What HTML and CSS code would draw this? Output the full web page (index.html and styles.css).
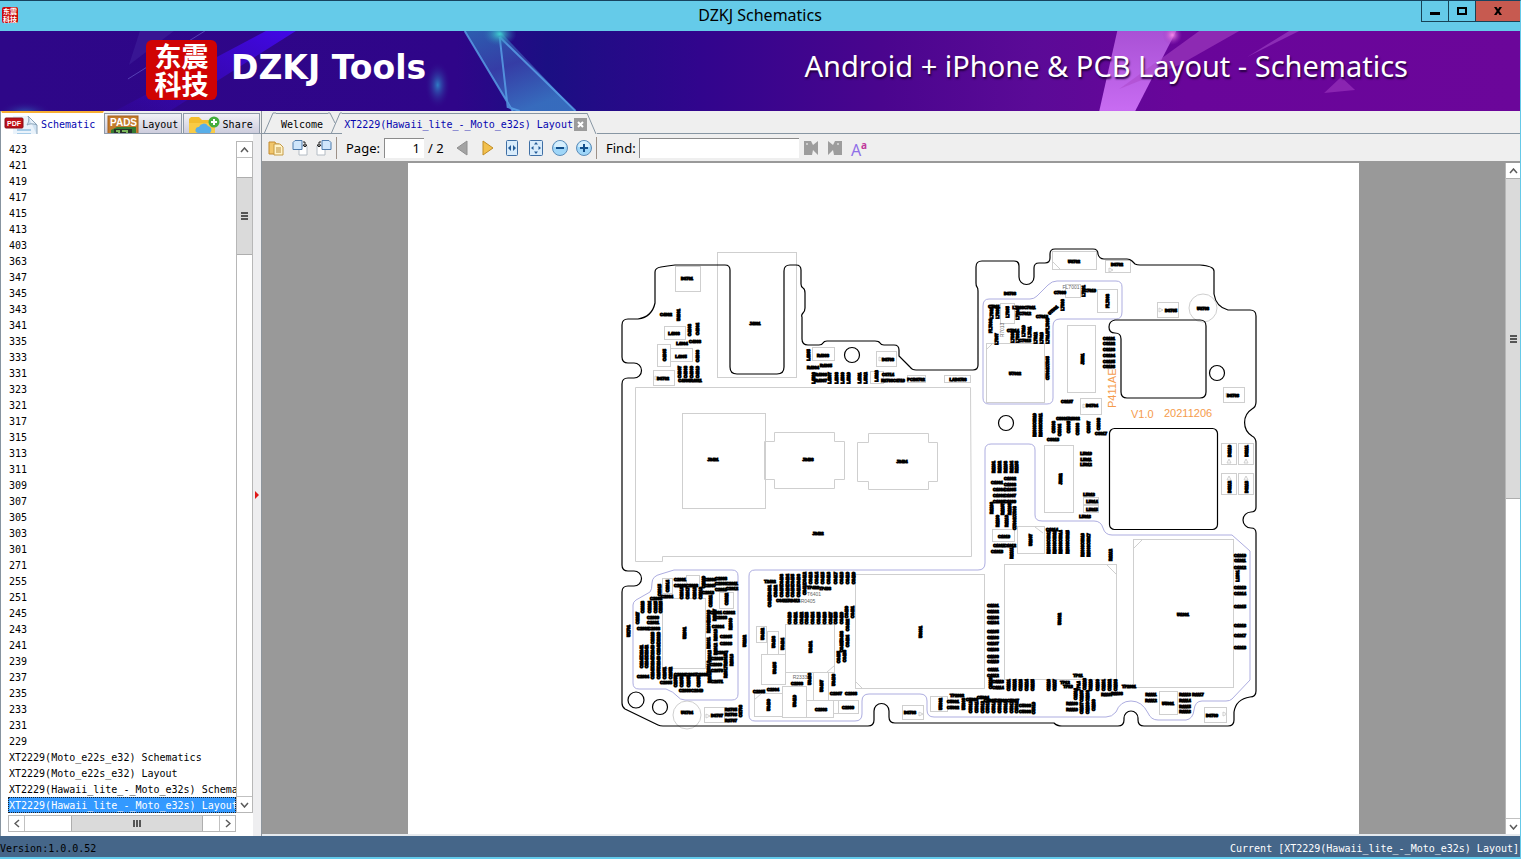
FILE: index.html
```html
<!DOCTYPE html>
<html lang="en">
<head>
<meta charset="utf-8">
<title>DZKJ Schematics</title>
<link rel="stylesheet" href="styles.css">
</head>
<body>
<header class="titlebar">
  <div class="appicon"><span>东震</span><span>科技</span></div>
  <h1 class="title">DZKJ Schematics</h1>
  <div class="winbtns">
    <button class="win" aria-label="Minimize"><svg width="10" height="10"><path d="M0 6h10v3H0z"/></svg></button>
    <button class="win" aria-label="Maximize"><svg width="10" height="8"><path d="M1 1h8v6H1z" fill="none" stroke="#000" stroke-width="2"/></svg></button>
    <button class="win close" aria-label="Close"><svg width="8" height="8"><path d="M0 0h2.500l1.500 2.300L5.500 0H8L5.300 4 8 8H5.500L4 5.700 2.500 8H0l2.700-4z"/></svg></button>
  </div>
</header>
<section class="banner">
  <svg class="art" viewBox="0 0 1521 80" preserveAspectRatio="none" aria-hidden="true">
    <defs>
      <linearGradient id="beam" x1="1" y1="0" x2="0" y2="1"><stop offset="0" stop-color="#4208e8"/><stop offset="1" stop-color="#3a08c8" stop-opacity=".15"/></linearGradient>
      <linearGradient id="glass" x1="0" y1="0" x2=".5" y2="1"><stop offset="0" stop-color="#2d7bbd"/><stop offset=".5" stop-color="#3b4db0"/><stop offset="1" stop-color="#3f8ad0"/></linearGradient>
      <linearGradient id="pink" x1="0" y1="0" x2="0" y2="1"><stop offset="0" stop-color="#a951d5"/><stop offset="1" stop-color="#c86cf2"/></linearGradient>
      <radialGradient id="glow"><stop offset="0" stop-color="#2f7cc4"/><stop offset="1" stop-color="#2f0686" stop-opacity="0"/></radialGradient>
      <radialGradient id="teal"><stop offset="0" stop-color="#3fd0d0"/><stop offset="1" stop-color="#2a6ab0" stop-opacity="0"/></radialGradient>
      <radialGradient id="rose"><stop offset="0" stop-color="#f58ae8"/><stop offset="1" stop-color="#9a30c0" stop-opacity="0"/></radialGradient>
    </defs>
    <path d="M266 0h30L170 80h-55z" fill="url(#beam)"/>
    <path d="M140 0h34l-45 34z" fill="#42249e" opacity=".5"/>
    <path d="M205 0L128 48" stroke="#5540b5"/>
    <ellipse cx="438" cy="54" rx="13" ry="24" fill="url(#glow)"/>
    <ellipse cx="25" cy="82" rx="28" ry="12" fill="url(#glow)" opacity=".7"/>
    <path d="M465 0h35l76 80h-63z" fill="url(#glass)" opacity=".75"/>
    <path d="M465 0l48 80M500 6l76 74M500 6l8 70 12 4" fill="none" stroke="#5aa2e8" stroke-width="2" opacity=".8"/>
    <ellipse cx="500" cy="3" rx="17" ry="12" fill="url(#teal)"/>
    <path d="M1118 0h59l-41 80h-36z" fill="url(#pink)"/>
    <path d="M1200 0h40l-60 34-60 24z" fill="#ac48c8" opacity=".55"/>
    <path d="M1290 0h10l-52 26z" fill="#a146c8" opacity=".6"/>
    <path d="M1342 46l14 13-31 3z" fill="#9b35bd" opacity=".65"/>
    <circle cx="1173" cy="4" r="10" fill="url(#rose)"/>
  </svg>
  <div class="logo"><span>东震</span><span>科技</span></div>
  <strong class="brand">DZKJ Tools</strong>
  <p class="slogan">Android + iPhone &amp; PCB Layout - Schematics</p>
</section>
<div class="work">
  <aside class="side">
    <nav class="sidetabs">
      <button class="stab on">
        <svg width="34" height="20"><path d="M9 1h15l9 8v11H9z" fill="#eaf3fb"/><path d="M24 1l9 9v10M24 1c2 4 0 7-1 9 4-2 7-1 10 0" fill="#cfe2f2" stroke="#8aa3b8"/><path d="M13 14h14v2H13zM13 18h14v2H13z" fill="#a7cce8"/><rect x="1" y="3" width="18" height="10" rx="1" fill="#c01018" stroke="#851018"/><text x="3" y="11" class="pdf">PDF</text></svg>
        <span>Schematic</span></button>
      <button class="stab">
        <svg width="32" height="19"><rect x="1" y="1" width="30" height="18" fill="#c27a2c" stroke="#a6601c"/><path d="M4 15l6-3h19v7H4z" fill="#347b32"/><path d="M7 14h18v5H7z" fill="#26302a"/><path d="M9 16h3v3M15 16h5v3" fill="none" stroke="#7bb85c" stroke-width="2"/><text x="3" y="11" class="pads">PADS</text></svg>
        <span>Layout</span></button>
      <button class="stab">
        <svg width="34" height="20"><path d="M3 4l2-2h8l3 3h13v15H3z" fill="#f3bd2e"/><path d="M3 8h26v12H3z" fill="#f9cb45"/><path d="M12 18a3 3 0 0 1 1-6 5 5 0 0 1 9-1 4 4 0 0 1 2 7z" fill="#58aee8"/><circle cx="28" cy="7" r="5.500" fill="#44ad3d"/><path d="M28 4v6M25 7h6" stroke="#fff" stroke-width="2"/></svg>
        <span>Share</span></button>
    </nav>
    <div class="listwrap">
      <ul class="list" id="files" role="listbox" aria-label="Files"></ul>
      <div class="vbar">
        <button class="arr" aria-label="Scroll up"><svg width="9" height="6"><path d="M1 5l3.500-4L8 5"/></svg></button>
        <div class="track"><div class="thumb side-thumb"><i class="grip"></i></div></div>
        <button class="arr" aria-label="Scroll down"><svg width="9" height="6"><path d="M1 1l3.500 4L8 1"/></svg></button>
      </div>
    </div>
    <div class="hbar">
      <button class="arr" aria-label="Scroll left"><svg width="6" height="9"><path d="M5 1L1 4.500 5 8"/></svg></button>
      <div class="htrack"><div class="hthumb"><i class="hgrip"></i></div></div>
      <button class="arr" aria-label="Scroll right"><svg width="6" height="9"><path d="M1 1l4 3.500L1 8"/></svg></button>
    </div>
    <svg class="split" width="4" height="8"><path d="M0 0l4 4-4 4z" fill="#e01818"/></svg>
  </aside>
  <main class="main">
    <nav class="doctabs">
      <svg class="edge" width="14" height="22"><path d="M2 22L11 1h3"/></svg>
      <button class="dtab welcome">Welcome</button>
      <svg class="edge" width="14" height="22"><path d="M0 1h2l5 10M3 22L12 1h2"/></svg>
      <button class="dtab current">XT2229(Hawaii_lite_-_Moto_e32s) Layout</button>
      <div class="xwrap"><button class="x" aria-label="Close tab"><svg width="7" height="7"><path d="M1 1l5 5M6 1L1 6" stroke="#fff" stroke-width="2"/></svg></button></div>
      <svg class="edge last" width="10" height="22"><path d="M0 1l9 21"/></svg>
      <div class="rest"></div>
    </nav>
    <div class="toolbar">
      <button class="tb" aria-label="Open"><svg width="16" height="16"><path d="M1 2h6l1 2h3v10H1z" fill="#f1c66b" stroke="#c38a2f"/><path d="M6 4h6l3 3v8H6z" fill="#fff3c8" stroke="#c59b46"/><path d="M8 8h5M8 10h5M8 12h5" stroke="#b98d3a"/></svg></button>
      <button class="tb" aria-label="Rotate right"><svg width="16" height="16"><path d="M7 6h8v9H7z" fill="#fff" stroke="#b4bcc4"/><path d="M1 2.500l2-2h7v9H1z" fill="#cfe6fb" stroke="#4f7cad"/><path d="M11 2h2v3M11 5h4l-2 2z" fill="none" stroke="#222"/></svg></button>
      <button class="tb" aria-label="Rotate left"><svg width="16" height="16"><path d="M1 6h8v9H1z" fill="#fff" stroke="#b4bcc4"/><path d="M6 .5h7l2 2v7H6z" fill="#cfe6fb" stroke="#4f7cad"/><path d="M5 2H3v3M1 5h4L3 7z" fill="none" stroke="#222"/></svg></button>
      <i class="sep"></i>
      <label class="lab page-l" for="page">Page:</label><input class="field pg" id="page" value="1">
      <span class="of">/ 2</span>
      <button class="tb prev" aria-label="Previous page"><svg width="12" height="16"><path d="M11 1v14L1 8z" fill="#a3a3a3" stroke="#8f8f8f"/></svg></button>
      <button class="tb next" aria-label="Next page"><svg width="12" height="16"><path d="M1 1v14L11 8z" fill="#f2c04d" stroke="#c18c25"/></svg></button>
      <button class="tb" aria-label="Fit width"><svg width="12" height="16"><rect x=".5" y=".5" width="11" height="15" rx="1" fill="#d9ecfb" stroke="#3f6fa5"/><path d="M5 5v6L2 8zM7 5v6l3-3z" fill="#245c98"/></svg></button>
      <button class="tb" aria-label="Fit page"><svg width="14" height="16"><rect x=".5" y=".5" width="13" height="15" rx="1" fill="#d9ecfb" stroke="#3f6fa5"/><path d="M7 2l2 2.500H5zM7 14l2-2.500H5zM2 8l2.500-2v4zM12 8L9.500 6v4z" fill="#245c98"/></svg></button>
      <button class="tb" aria-label="Zoom out"><svg width="16" height="16"><circle cx="8" cy="8" r="7.500" fill="#9fd6f8" stroke="#5c8cb8"/><path d="M2 7a6 6 0 0 1 12 0z" fill="#d6effd"/><path d="M4 7h8v2H4z" fill="#12508c"/></svg></button>
      <button class="tb" aria-label="Zoom in"><svg width="16" height="16"><circle cx="8" cy="8" r="7.500" fill="#9fd6f8" stroke="#5c8cb8"/><path d="M2 7a6 6 0 0 1 12 0z" fill="#d6effd"/><path d="M4 7h3V4h2v3h3v2H9v3H7V9H4z" fill="#12508c"/></svg></button>
      <i class="sep"></i>
      <label class="lab find-l" for="find">Find:</label><input class="field fd" id="find">
      <button class="tb" aria-label="Find previous"><svg width="16" height="16"><path d="M1 1h7l2 4 5-4v14l-5-5-1 5H1z" fill="#9d9d9d"/><circle cx="4" cy="4" r="1" fill="#ddd"/></svg></button>
      <button class="tb" aria-label="Find next"><svg width="16" height="16"><path d="M15 1H8L6 5 1 1v14l5-5 1 5h8z" fill="#9d9d9d"/><circle cx="11" cy="4" r="1" fill="#ddd"/></svg></button>
      <button class="tb case" aria-label="Match case"><span class="big">A</span><span class="small">a</span></button>
    </div>
    <div class="viewer">
      <div class="desk"><svg class="board" id="board" viewBox="408 163 951 671" role="img" aria-label="Board layout">
        <g class="thin">
          <rect x="717.5" y="252.5" width="79" height="125"/>
          <path d="M635.5 387.500H970.500L971.500 556.500H662.500V561.500H635.500z"/>
          <rect x="682.5" y="413.5" width="83" height="95"/>
          <path d="M774.500 432.500h60v9h10v38h-10v9h-60v-9h-10v-38h10zM868.500 433.500h60v9h9v39h-9v8h-60v-8h-11v-39h11z"/>
          <path d="M1134 548l9-9M1106 564l10 10M986 350l7-7M1035 527l8 6M827 672l7-6M855 681l7 7M754 700l8-7M1053 262l7 7"/>
          <circle cx="687" cy="715" r="14"/><circle cx="1203" cy="308" r="14"/>
        </g>
        <g class="zone">
          <path d="M983 306Q983 299 989 299H1030Q1034 299 1037 296L1048 285Q1052 281 1057 281H1116Q1122 281 1122 287V312Q1122 319 1116 319H1060Q1053 319 1053 326V398Q1053 404 1047 404H989Q983 404 983 398z"/>
          <path d="M749 576Q749 570 755 570H978Q985 570 985 563V450Q985 444 991 444H1029Q1035 444 1035 450V515Q1035 521 1042 521H1094Q1101 521 1103 528T1112 535H1232L1250 551V680L1232 699Q1230 701 1226 701H1202Q1195 701 1194 710T1186 720H1158Q1151 720 1148 713Q1142 701 1131 701T1116 712Q1112 717 1106 717H934Q927 717 927 710V701Q927 694 920 694H869Q862 694 862 701V714Q862 721 855 721H755Q749 721 749 715z"/>
          <path d="M674 570H732Q738 570 738 576V694Q738 700 732 700H685Q680 700 677 696T666 689H639Q633 689 633 683V605Q633 602 636 600L650 592Q652 590 652 583T661 574z"/>
        </g>
        <g class="outline">
          <path d="M675 265H725Q730 265 730 270V367Q730 374 737 374H777Q784 374 784 367V271Q784 265 790 265H796Q801 265 801 270V284Q801 287 803 288T805 293V308Q805 311 803 313T802 317V339Q802 345 808 345H819Q822 345 823 343T827 341H875Q879 341 880 343T884 345H894Q899 345 899 350V356L910 367Q912 370 916 370H973Q978 370 978 365V291Q978 288 977 287T976 283V267Q976 261 982 261H1014Q1019 261 1019 266V277A7.500 7.500 0 0 0 1034 277V268Q1034 263 1039 263H1045Q1050 263 1050 258V254Q1050 249 1055 249H1093Q1098 249 1098 254Q1099 259 1104 259H1127Q1130 259 1132 261L1135 264Q1137 265 1140 265H1200Q1214 266 1214 271V294Q1216 307 1228 310H1250Q1256 310 1256 316V402Q1256 407 1252 409A16 16 0 0 0 1252 436Q1256 438 1256 443V507Q1256 512 1251 512A8 8 0 0 0 1251 528Q1256 528 1256 533V691Q1256 697 1250 697Q1236 699 1234 712V720Q1234 726 1228 726H1144Q1138 726 1138 720V718A7 7 0 0 0 1124 718V720Q1124 726 1118 726H1062Q1057 726 1054 723H895Q889 723 889 717V711A7.500 7.500 0 0 0 874 711V720Q874 726 868 726H663Q660 726 658 725L625 709Q622 707 622 703V592Q622 586 628 586H634A7.500 7.500 0 0 0 634 571H628Q622 571 622 565V384Q622 378 628 378H634A7.500 7.500 0 0 0 634 363H628Q622 363 622 357V325Q622 319 628 319H638Q652 317 655 303V272Q655 268 661 267T675 265z"/>
          <circle cx="852" cy="355" r="7.500"/><circle cx="1217" cy="373" r="7.500"/><circle cx="1006" cy="423" r="7.500"/><circle cx="636" cy="700" r="8"/><circle cx="660" cy="707" r="7.500"/>
          <path d="M1115 320H1200Q1206 320 1206 326V392Q1206 398 1200 398H1127Q1121 398 1121 392V339Q1121 333 1115 333Q1109 333 1109 327T1115 320z"/>
          <rect x="1109.500" y="428.500" width="108" height="101" rx="5"/>
        </g>
        <g class="mark"><text x="1131" y="418">V1.0</text><text x="1164" y="417">20211206</text><text transform="translate(1116 408) rotate(-90)">P411AE</text></g>
      </svg></div>
      <div class="vbar">
        <button class="arr" aria-label="Scroll up"><svg width="9" height="6"><path d="M1 5l3.500-4L8 5"/></svg></button>
        <div class="track"><div class="thumb main-thumb"><i class="grip"></i></div></div>
        <button class="arr" aria-label="Scroll down"><svg width="9" height="6"><path d="M1 1l3.500 4L8 1"/></svg></button>
      </div>
    </div>
  </main>
</div>
<footer class="status"><span>Version:1.0.0.52</span><span class="cur">Current [XT2229(Hawaii_lite_-_Moto_e32s) Layout]</span></footer>
<script src="app.js"></script>
</body>
</html>
```
FILE: styles.css
```css
* { box-sizing: border-box; }
body {
  margin: 0; height: 100vh; display: flex; flex-direction: column; overflow: hidden;
  background: #efefef; border-top: 1px solid #17435f; border-right: 1px solid #65c9e8; border-bottom: 2px solid #62cbec;
  font: 10px/16px "DejaVu Sans Mono", monospace; color: #000;
}
button { font: inherit; color: inherit; margin: 0; padding: 0; border: 0; background: none; display: flex; align-items: center; justify-content: center; }
svg { display: block; flex: none; }

.titlebar { height: 30px; flex: none; display: grid; grid-template-columns: 100px 1fr 100px; background: #65cbe9; }
.appicon { width: 16px; height: 16px; margin: 6px 0 0 2px; border-radius: 2px; background: #cb0a0a; color: #fff; font: bold 7px/8px "Noto Sans CJK SC", sans-serif; display: flex; flex-direction: column; align-items: center; justify-content: center; }
.title { margin: 0; text-align: center; font: 16px/28px "Noto Sans", sans-serif; }
.winbtns { display: flex; justify-content: flex-end; height: 21px; }
.win { width: 27px; border: 1px solid #174256; border-top: 0; border-right: 0; }
.win.close { width: 45px; background: #c75a50; }

.banner { position: relative; height: 80px; flex: none; display: flex; align-items: center; padding: 0 112px 0 146px; color: #fff; background: linear-gradient(90deg, #2e0788 0%, #2f0589 30%, #1b0f83 36%, #31058d 46%, #4a058e 58%, #5b0a97 68%, #69059a 78%, #6b069a 100%); }
.art { position: absolute; inset: 0; width: 100%; height: 100%; }
.logo { position: relative; width: 71px; height: 60px; margin-bottom: 2px; border-radius: 6px; background: #d00303; font: bold 27px/28px "Noto Sans CJK SC", sans-serif; display: flex; flex-direction: column; align-items: center; justify-content: center; }
.brand { position: relative; margin: 0 0 6px 14px; font: bold 33px/40px "DejaVu Sans", sans-serif; white-space: nowrap; }
.slogan { position: relative; margin: 0 0 10px auto; font: 29px/40px "Noto Sans", sans-serif; text-shadow: 1px 2px 2px #22003c; white-space: nowrap; }

.work { flex: 1; min-height: 0; display: flex; }
.side { position: relative; flex: none; width: 262px; display: flex; flex-direction: column; padding-bottom: 4px; background: #fff; border-left: 1px solid #8794a0; border-right: 1px solid #8e969d; box-shadow: inset -8px 0 #eeeef0; }
.sidetabs { height: 23px; flex: none; display: flex; align-items: flex-end; background: #efefef; border-bottom: 1px solid #909cad; }
.stab { height: 20px; padding: 2px 4px 0 2px; gap: 3px; justify-content: flex-start; overflow: hidden; white-space: nowrap; background: linear-gradient(#f1f1f6, #cdcddd); border: 1px solid #8d99a8; border-bottom: 0; width: 78px; margin-right: 1px; }
.stab.on { width: 104px; height: 23px; margin: 0 0 -1px; background: #fff; border-color: #fff; border-top: 2px solid #f7ae32; color: #0606b0; }
.pdf { font: bold 7px "Liberation Sans", sans-serif; fill: #fff; }
.pads { font: bold 10px "Liberation Sans", sans-serif; fill: #fff; }
.listwrap { flex: 1; min-height: 0; display: flex; margin: 7px 8px 2px 7px; }
.list { flex: 1; min-width: 0; overflow: hidden; margin: 0; padding: 0; list-style: none; white-space: nowrap; }
.list li { height: 16px; padding-left: 1px; line-height: 18px; overflow: hidden; }
.list .sel { color: #fff; background: #3399ff; outline: 1px dotted #202020; outline-offset: -1px; }
.vbar { flex: none; width: 17px; display: flex; flex-direction: column; background: #fff; border: 1px solid #b7b7b7; }
.arr { flex: none; width: 15px; height: 15px; background: #fff; }
.arr path { fill: none; stroke: #5a5a5a; stroke-width: 1.500; }
.track { flex: 1; border: solid #c1c1c1; border-width: 1px 0; }
.thumb { display: flex; align-items: center; justify-content: center; background: #dadada; border: solid #aeaeae; border-width: 1px 0; }
.side-thumb { height: 78px; margin-top: 19px; }
.main-thumb { height: 321px; margin-top: -1px; }
.grip { width: 7px; height: 8px; background: repeating-linear-gradient(#555 0 2px, #dadada 2px 3px); }
.hbar { flex: none; display: flex; height: 17px; width: 228px; margin-left: 7px; background: #fff; border: 1px solid #b7b7b7; }
.htrack { flex: 1; border: solid #c1c1c1; border-width: 0 1px; }
.hthumb { height: 100%; width: 132px; margin-left: 46px; background: #dadada; border: solid #aeaeae; border-width: 0 1px; display: flex; align-items: center; justify-content: center; }
.hgrip { width: 8px; height: 7px; background: repeating-linear-gradient(90deg, #555 0 2px, #dadada 2px 3px); }
.split { position: absolute; right: 2px; top: 53%; margin-top: -4px; }

.main { flex: 1; min-width: 0; display: flex; flex-direction: column; }
.doctabs { height: 23px; flex: none; display: flex; align-items: flex-end; }
.edge path { fill: none; stroke: #8796a3; }
.edge { height: 22px; border-bottom: 1px solid #8796a3; }
.edge.last { border-bottom: 0; }
.dtab { height: 21px; border-top: 1px solid #8796a3; border-bottom: 1px solid #8796a3; white-space: nowrap; padding: 2px 5px 0; }
.dtab.current { color: #0606b0; border-bottom-color: #efefef; padding: 2px 1px 0 2px; }
.xwrap { height: 21px; border-top: 1px solid #8796a3; padding-top: 4px; }
.x { width: 13px; height: 13px; background: #9b9b9b; }
.rest { flex: 1; border-bottom: 1px solid #8796a3; }
.toolbar { height: 29px; flex: none; display: flex; align-items: center; padding-left: 2px; border-bottom: 2px solid #999; font: 13px/20px "Noto Sans", sans-serif; }
.tb { flex: none; width: 24px; height: 24px; }
.sep { width: 1px; height: 22px; background: #9d9188; }
.lab { flex: none; margin-left: 9px; }
.page-l { width: 38px; }
.find-l { width: 33px; }
.field { height: 20px; font: inherit; border: solid #8b8b8b; border-width: 1px 0 0 1px; background: #fff; padding: 0 4px; border-radius: 0; min-width: 0; }
.pg { width: 40px; text-align: right; }
.fd { width: 160px; }
.of { flex: none; width: 22px; margin-left: 4px; }
.next { margin-left: 2px; }
.case { align-items: center; }
.big { font: 16px/20px "Noto Sans", sans-serif; color: #8f70e8; margin-top: 4px; }
.small { font: bold 10px/12px "Noto Sans", sans-serif; color: #c0389c; margin-bottom: 6px; }
.viewer { flex: 1; min-height: 0; display: flex; border-bottom: 2px solid #e6eaee; }
.desk { flex: 1; min-width: 0; padding: 0 146px; background: #999; }
.board { width: 100%; height: 100%; background: #fff; }
.viewer .vbar { width: 15px; border-width: 0 0 0 1px; }
.viewer .arr { width: 14px; }
.thin { fill: none; stroke: #cfcfcf; }
.zone { fill: none; stroke: #adade0; }
.outline { fill: none; stroke: #000; stroke-width: 1.200; }
.mark { fill: #f59b4c; font: 11px "Liberation Sans", sans-serif; }
.ref { font: bold 4px "Liberation Sans", sans-serif; fill: #000; stroke: #000; stroke-width: 1.200; text-anchor: middle; }
.ref.pale { font-weight: normal; font-size: 5px; fill: #666; stroke: none; }
.pad { fill: none; stroke: #e4e4e4; }
.status { height: 21px; flex: none; display: flex; justify-content: space-between; align-items: center; padding: 5px 1px 0 0; background: #456689; }
.cur { color: #fff; }
```
FILE: app.js
```js
const files = ("423 421 419 417 415 413 403 363 347 345 343 341 335 333 331 323 321 317 315 313 311 309 307 305 303 301 271 255 251 245 243 241 239 237 235 233 231 229").split(" ")
  .concat(["XT2229(Moto_e22s_e32) Schematics", "XT2229(Moto_e22s_e32) Layout", "XT2229(Hawaii_lite_-_Moto_e32s) Schematics", "XT2229(Hawaii_lite_-_Moto_e32s) Layout"]);
const list = document.getElementById("files");
files.forEach((name, i) => {
  const li = document.createElement("li");
  li.textContent = name;
  li.setAttribute("role", "option");
  if (i === files.length - 1) { li.className = "sel"; li.setAttribute("aria-selected", "true"); }
  list.append(li);
});

const NS = "http://www.w3.org/2000/svg";
const board = document.getElementById("board");
function add(parent, tag, attrs) {
  const el = document.createElementNS(NS, tag);
  for (const k in attrs) el.setAttribute(k, attrs[k]);
  parent.append(el);
  return el;
}

// Component bodies: x y width height
const bodies = `675 266 25 25;1052 251 44 18;1105 260 25 12;662 598 43 70;785 624 49 48;855 574 129 114;1004 564 112 115;1133 539 100 148;
1044 445 29 67;1067 325 28 67;986 343 58 59;761 654 24 30;754 693 28 23;782 686 24 31;806 700 27 17;767 631 11 23;756 626 10 16;1017 526 27 27;1097 289 20 23;
1157 302 21 15;1223 387 21 15;1221 443 15 21;1238 443 15 21;1221 473 15 21;1238 473 15 21;653 370 21 15;657 344 13 22;664 326 21 13;670 348 22 13;
876 351 20 15;902 705 21 14;704 707 20 15;1204 707 22 15;1159 691 18 23;930 696 17 15;838 700 20 13;813 672 15 28;1080 398 21 16;1000 303 14 20;1065 284 15 13;
812 347 22 13;870 371 13 12;907 375 18 7;944 375 26 7;992 529 22 12;719 592 14 16;686 575 13 11;662 578 10 15;1083 497 15 7;1083 505 15 7;833 700 5 13`;
const thin = board.querySelector(".thin");
bodies.split(";").forEach(s => {
  const [x, y, width, height] = s.trim().split(" ");
  add(thin, "rect", { x: +x + .5, y: +y + .5, width, height });
});

// Small triangles marking diode polarity
["655 376", "879 357", "1159 308", "1226 393", "1083 404", "706 714", "919 712", "1223 712", "1109 268"].forEach(s => {
  const [x, y] = s.split(" ");
  add(thin, "path", { d: `M${x} ${y}l4 2-4 2z` });
});
["1229 459", "1246 459", "1229 476", "1246 476"].forEach(s => {
  const [x, y] = s.split(" ");
  add(thin, "path", { d: `M${x - 2} ${+y + 4}h4l-2-4z` });
});

// Designators: orientation, first name, then x,y positions
const parts = `h D3702 663,378 888,359 1092,405 1171,310 1233,395 717,715 910,712 1212,715
h D3701 687,278 1117,264 1010,293
h J4001 755,323
h J3401 713,459 818,533 808,459 902,461
h U3702 1074,261 1203,308 687,712
h C4002 666,314 695,341
v U4001 678,315
v C4003 689,330 697,329 664,355 697,356 679,372 685,372 691,372 697,372
h L4003 674,333 682,343 681,356
h C4008R4011 690,380
v L4305 808,355 813,378 829,378 836,378 842,378 848,378 859,378 865,378 876,376
h R4303 823,355 813,367 826,365 821,374 821,380
h C3714 888,374
h R3708C3710 893,380
h PCB3702 916,379
h LAB3703 958,379
h C7009 1060,292 1090,290 994,306 1025,313 1042,316 1013,330 1025,340
v L7001 1083,291 991,313 997,313 1017,314 1007,312 1062,305 996,339 1012,337 1017,337 1023,331 1029,332 1035,338 1041,338 1047,338
v FL7003 1107,301 990,326 1047,325
p FL7001 1071,287
q R7013 1002,330
h L7009C7011 1024,307
h U7002 1015,373
v C7004C7005 1047,368 1014,518
v J3901 1082,359 1060,479
h C8101 1109,338 1109,343 1109,349 1109,355 1109,361 1109,366 1067,401
v R8009C8010 1034,425 1040,425 1048,542 1054,542 1060,542 1067,542 1082,545 1088,545
h C8001R8002 1068,418
v C8003 1053,427 1059,430 1068,427 1077,429 1088,427 1098,424
h C8017 1101,433 1053,439
v R1201 993,467 999,467 1005,467 1011,467 1016,467 991,508 1002,509 1009,509 997,521 1006,521 1011,553 1110,555
h C1001 997,482 1010,478 1010,484 999,489 1010,489 999,495 1010,495 999,501 1010,501 1004,536 999,545 1010,545 997,551 1052,529
v U1007 1030,540
h L5010 1086,453 1086,459 1086,464 1089,494 1092,501 1092,509 1085,516
v D3210 1229,451 1246,451 1229,487 1246,487
h C1310 1240,555 1240,560 1240,567 1240,587 1240,593 1240,606 1240,625 1240,635 1240,647
v L1301 1237,576
h C2001 680,579 680,585 692,585 667,596 656,598 710,579 710,585 721,578 721,583 721,589 732,583 732,588 708,592
v C2014 667,586 659,590 681,593 687,593 694,593 700,593 703,582 710,601 726,599 642,607 649,607 655,607 660,607 637,618 652,638 658,638
h C2030 653,617 653,622 643,628 654,628 643,676 666,682 680,674 691,674 702,674 685,690 697,690
v U2701 628,631
v C2041 641,651 646,651 652,651 658,649 641,662 646,662 652,662 658,662 652,673 658,673 664,673 670,673 675,681 681,681 688,681 698,681
v U2001 684,633
v R2006 708,616 714,615 708,627 730,624 715,635 708,643 715,649 709,656 708,667 725,660 731,660 725,672 709,677
h C2061 716,612 729,612 721,617 718,626 726,636 726,643 722,652 717,658 716,664 717,670 717,681
v U3202 744,641
h R3705 731,709 731,714 731,720
v C3708 740,711
h T2402 770,581
v C0401 769,591 775,591 781,580 787,580 792,580 798,580 781,591 787,591 792,591 798,591 804,589 804,578 810,578 816,578 822,578 828,578 835,578 841,578 847,578 853,578 769,601
h TP402 813,587 825,588
p R0405 808,601
p T6401 814,594
h C0411R0412 788,600
v C0420 789,618 795,618 801,618 806,618 812,618 818,618 824,618 830,618 835,618 841,618 846,612 852,612 847,625 841,637 847,641 838,657 844,656 841,646
v U0401 810,647 762,634 773,642 782,644 774,668 809,679 821,686 833,680 768,705 794,701
p R2333 800,677
h C2303 797,683 773,689 759,691 821,709 836,693 851,693 848,707
v U0601 920,632 1059,619
h U1301 1183,614
h C1101 993,605 993,611 993,617 993,622 993,631 993,637 993,643 993,649 993,656 993,661 993,669 993,675 998,681 998,687
v C1120 990,683 1008,685 1014,685 1020,685 1026,685 1032,685 1048,685 1054,685 1084,684 1090,685 1097,685 1103,685 1109,685 1115,685 1075,694 1081,696 1087,696 1081,708 1087,708 1093,705
h TP11 1078,675 1065,682 1068,686
v TP14 1078,686
h TP2001 1129,686 957,695
h R1107 1107,694 1117,693 1072,703 1072,709 1151,694 1151,700 1185,694 1185,700 1185,706 1185,711 1198,694
h U5001 1168,703
v U5002 940,704 963,704
h C5001 953,701 953,707 972,699 983,697 990,700 1001,700 1013,700 1025,705 1025,711
v C5010 970,707 976,707 982,707 987,707 993,707 999,707 1005,707 1011,707 1016,707 1033,708
d C7001 1053,310`;
const angle = { h: 0, v: -90, p: 0, q: -90, d: -40 };
const layer = add(board, "g", {});
parts.split("\n").forEach(row => {
  const [dir, first, ...spots] = row.trim().split(" ");
  const [, stem, digits] = first.match(/^(.*?)(\d+)$/);
  spots.forEach((spot, i) => {
    const [x, y] = spot.split(",");
    const g = add(layer, "g", { transform: `translate(${x} ${y}) rotate(${angle[dir]})` });
    const w = first.length > 7 ? 22 : 12;
    add(g, "rect", { class: "pad", x: -w / 2, y: -3, width: w, height: 6 });
    const t = add(g, "text", { class: "ref" + (dir === "p" || dir === "q" ? " pale" : ""), y: 1.500 });
    t.textContent = stem + String(+digits + i).padStart(digits.length, "0");
  });
});
board.querySelectorAll(".pad").forEach(pad => thin.append(Object.assign(pad.cloneNode(), {})) || pad.remove());
```
